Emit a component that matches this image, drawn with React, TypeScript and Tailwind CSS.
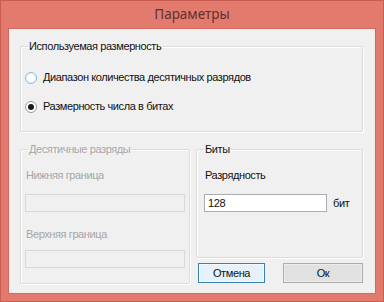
export default function App() {
  return (
    <div className="w-[384px] h-[302px] bg-[#e27a6e] border border-[#c95d52] flex flex-col font-['Liberation_Sans',Arial,sans-serif] text-[11px] leading-[13px] tracking-[-0.4px] text-[#111]">
      {/* Title bar */}
      <div className="h-[27px] flex items-center justify-center font-['Noto_Sans',sans-serif] text-[13.5px] tracking-normal text-[#62302b]">
        Параметры
      </div>

      {/* Client area */}
      <div className="mx-[7px] mb-[7px] flex-1 bg-[#f0f0f0] border border-[#d46a5f] pl-[11px] pr-[12px] pt-[11px]">
        {/* Используемая размерность */}
        <fieldset className="h-[92px] border border-[#dcdcdc] rounded-[2px] shadow-[inset_1px_1px_0_#fff,1px_1px_0_#fff]">
          <legend className="ml-[7px] px-[1px]">Используемая размерность</legend>
          <div className="flex flex-col gap-[16px] pt-[18px] pl-[4px]">
            <div className="flex items-center gap-[6px]">
              <span className="w-[12px] h-[12px] rounded-full border border-[#8ab6e2] bg-white shadow-[inset_0_0_2px_#cfe3f7]" />
              <span>Диапазон количества десятичных разрядов</span>
            </div>
            <div className="flex items-center gap-[6px]">
              <span className="w-[12px] h-[12px] rounded-full border border-[#9a9a9a] bg-white flex items-center justify-center">
                <span className="w-[6px] h-[6px] rounded-full bg-[#1a1a1a]" />
              </span>
              <span>Размерность числа в битах</span>
            </div>
          </div>
        </fieldset>

        <div className="mt-[11px] flex gap-[6px]">
          {/* Десятичные разряды (disabled) */}
          <fieldset className="w-[170px] h-[141px] border border-[#dcdcdc] rounded-[2px] shadow-[inset_1px_1px_0_#fff,1px_1px_0_#fff] text-[#a6a6a6]">
            <legend className="ml-[7px] px-[1px]">Десятичные разряды</legend>
            <div className="flex flex-col px-[4px] pt-[13px]">
              <span className="ml-[1px]">Нижняя граница</span>
              <div className="mt-[12px] h-[18px] border border-[#d9d9d9] bg-[#f0f0f0]" />
              <span className="ml-[1px] mt-[16px]">Верхняя граница</span>
              <div className="mt-[9px] h-[18px] border border-[#d9d9d9] bg-[#f0f0f0]" />
            </div>
          </fieldset>

          <div className="w-[167px] flex flex-col">
            {/* Биты */}
            <fieldset className="h-[115px] border border-[#dcdcdc] rounded-[2px] shadow-[inset_1px_1px_0_#fff,1px_1px_0_#fff]">
              <legend className="ml-[7px] px-[1px]">Биты</legend>
              <div className="flex flex-col pl-[7px] pt-[13px]">
                <span className="ml-[1px]">Разрядность</span>
                <div className="mt-[12px] flex items-center gap-[6px]">
                  <div className="w-[123px] h-[18px] border border-[#abadb3] bg-white flex items-center px-[3px]">
                    128
                  </div>
                  <span>бит</span>
                </div>
              </div>
            </fieldset>

            {/* Buttons */}
            <div className="mt-[5px] flex justify-between pl-[2px]">
              <button className="w-[67px] h-[20px] border border-[#3c7fb1] bg-[#e5f1fb] shadow-[inset_0_0_0_1px_#f4f9fd] tracking-[-0.4px]">
                Отмена
              </button>
              <button className="w-[80px] h-[20px] border border-[#acacac] bg-[#e1e1e1] shadow-[inset_0_0_0_1px_#ececec] tracking-[-0.4px]">
                Ок
              </button>
            </div>
          </div>
        </div>
      </div>
    </div>
  );
}
